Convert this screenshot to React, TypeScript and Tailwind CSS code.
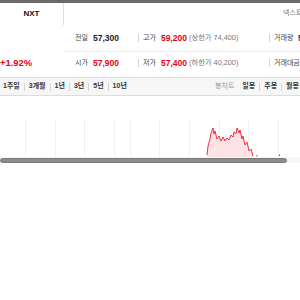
import React from 'react'

const periods = ['1주일', '3개월', '1년', '3년', '5년', '10년']
const gridX = [25, 55, 84, 114, 130, 159, 189, 219, 248, 278]

// intraday area, absolute page coords (y offset 96 removed below)
const pts: [number, number][] = [
  [207, 155], [208, 146], [210, 139], [211, 133], [213, 128], [214, 134], [215, 131],
  [217, 139], [219, 136], [221, 141], [223, 137], [225, 141], [227, 138], [229, 140],
  [231, 135], [233, 137], [234, 132], [236, 134], [237, 128], [239, 133], [240, 130],
  [242, 139], [243, 136], [245, 145], [247, 142], [249, 151], [251, 149], [253, 156],
]

function Sep() {
  return <span className="w-px h-[8px] bg-[#d4d4d4] shrink-0" />
}

export default function App() {
  const top = 96
  const line = pts.map(([x, y], i) => `${i ? 'L' : 'M'}${x} ${y - top}`).join(' ')
  const area = `${line} L253 ${157 - top} L207 ${157 - top} Z`

  return (
    <div className="w-[300px] h-[300px] bg-white overflow-hidden font-['Liberation_Sans','Noto_Sans_CJK_KR',sans-serif] text-[#222]">
      <div className="h-[3px] bg-[#6a6a6a]" />

      {/* tabs */}
      <div className="flex h-[22px] whitespace-nowrap overflow-hidden">
        <div className="w-[64px] shrink-0 border-r border-[#dedede] flex items-center justify-center text-[8px] font-bold text-[#111]">
          NXT
        </div>
        <div className="w-[219px] shrink-0" />
        <div className="flex items-center pb-[1px] text-[7px] text-[#777]">넥스트레이드</div>
      </div>

      {/* price info */}
      <div className="flex h-[27px] whitespace-nowrap overflow-hidden">
        <div className="w-[64px] shrink-0" />
        <div className="flex-1 flex items-center border-b border-[#ececec] pl-[11px]">
          <div className="w-[63px] shrink-0 flex items-center">
            <span className="w-[18px] text-[7px] text-[#444]">전일</span>
            <span className="text-[8.5px] font-bold">57,300</span>
          </div>
          <Sep />
          <div className="w-[130px] shrink-0 flex items-center pl-[4px]">
            <span className="w-[18px] text-[7px] text-[#444]">고가</span>
            <span className="text-[8.5px] font-bold text-[#e50012]">59,200</span>
            <span className="ml-[2px] text-[7.3px] text-[#777]">(상한가 74,400)</span>
          </div>
          <Sep />
          <div className="flex items-center pl-[4px]">
            <span className="w-[24px] text-[7px] text-[#444]">거래량</span>
            <span className="text-[8.5px] font-bold">5,812,349</span>
          </div>
        </div>
      </div>
      <div className="flex h-[22px] whitespace-nowrap overflow-hidden">
        <div className="w-[64px] shrink-0 flex items-center text-[9.4px] font-bold text-[#e50012]">+1.92%</div>
        <div className="flex-1 flex items-center pl-[11px]">
          <div className="w-[63px] shrink-0 flex items-center">
            <span className="w-[18px] text-[7px] text-[#444]">시가</span>
            <span className="text-[8.5px] font-bold text-[#e50012]">57,900</span>
          </div>
          <Sep />
          <div className="w-[130px] shrink-0 flex items-center pl-[4px]">
            <span className="w-[18px] text-[7px] text-[#444]">저가</span>
            <span className="text-[8.5px] font-bold text-[#e50012]">57,400</span>
            <span className="ml-[2px] text-[7.3px] text-[#777]">(하한가 40,200)</span>
          </div>
          <Sep />
          <div className="flex items-center pl-[4px]">
            <span className="text-[7px] text-[#444]">거래대금</span>
          </div>
        </div>
      </div>

      {/* period bar */}
      <div className="mt-[3px] h-[19px] flex items-center bg-[#f6f6f6] border-y border-[#dcdcdc] whitespace-nowrap overflow-hidden text-[7px]">
        <div className="w-[215px] shrink-0 flex items-center gap-[4px] pl-[3px] font-bold text-[#333]">
          {periods.map((p, i) => (
            <React.Fragment key={p}>
              {i > 0 && <Sep />}
              <span>{p}</span>
            </React.Fragment>
          ))}
        </div>
        <span className="text-[#9a9a9a] mr-[8px]">봉차트</span>
        <div className="flex items-center gap-[4px] font-bold text-[#333]">
          <span>일봉</span>
          <Sep />
          <span>주봉</span>
          <Sep />
          <span>월봉</span>
        </div>
      </div>

      {/* chart */}
      <svg width="300" height="61" viewBox="0 0 300 61" className="block">
        {gridX.map((x) => (
          <line key={x} x1={x + 0.5} y1={24} x2={x + 0.5} y2={61} stroke="#efefef" strokeWidth="1" />
        ))}
        <path d={area} fill="#fde3e5" />
        <path d={line} fill="none" stroke="#ec1c2e" strokeWidth="0.9" />
        <rect x="256.5" y={59} width="1" height="1.5" fill="#ec1c2e" />
        <rect x="279" y={58.5} width="1" height="1.5" fill="#ec1c2e" />
      </svg>

      {/* scrollbar */}
      <div className="flex items-center h-[6px] bg-[#f7f7f7]">
        <div className="w-[287px] h-[5px] rounded-full bg-[#8c8c8c] border border-[#7a7a7a]" />
      </div>
    </div>
  )
}
